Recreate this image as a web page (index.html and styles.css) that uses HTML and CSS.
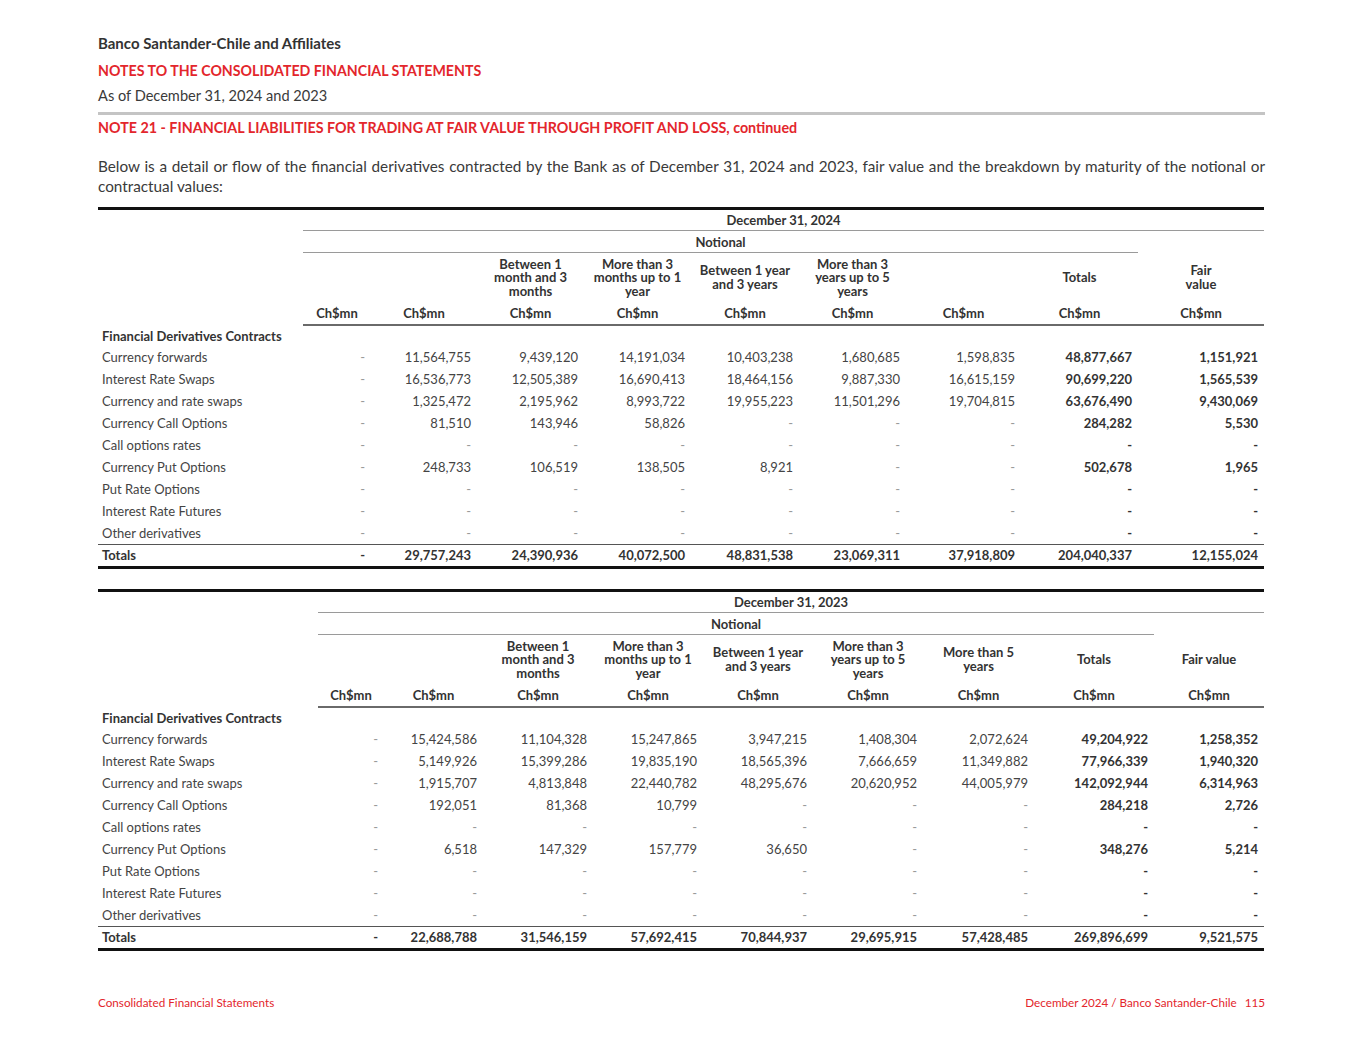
FILE: index.html
```html
<!DOCTYPE html>
<html lang="en">
<head>
<meta charset="utf-8">
<title>Banco Santander-Chile - Note 21</title>
<link rel="stylesheet" href="styles.css">
</head>
<body>
<div class="page">
  <header class="doc-head">
    <div class="company">Banco Santander-Chile and Affiliates</div>
    <div class="notes-title">NOTES TO THE CONSOLIDATED FINANCIAL STATEMENTS</div>
    <div class="as-of">As of December 31, 2024 and 2023</div>
    <div class="rule"></div>
    <div class="note-title">NOTE 21 - FINANCIAL LIABILITIES FOR TRADING AT FAIR VALUE THROUGH PROFIT AND LOSS, continued</div>
  </header>

  <p class="intro">Below is a detail or flow of the financial derivatives contracted by the Bank as of December 31, 2024 and 2023, fair value and the breakdown by maturity of the notional or contractual values:</p>

  <table class="fin t2024">
    <colgroup>
      <col class="c-label"><col class="c1"><col class="c2"><col class="c3"><col class="c4"><col class="c5"><col class="c6"><col class="c7"><col class="c8"><col class="c9">
    </colgroup>
    <thead>
      <tr class="h-date"><th class="blank" rowspan="4"></th><th colspan="9" class="span-line">December 31, 2024</th></tr>
      <tr class="h-notional"><th colspan="8" class="span-line">Notional</th><th></th></tr>
      <tr class="h-labels">
        <th></th><th></th>
        <th>Between 1<br>month and 3<br>months</th>
        <th>More than 3<br>months up to 1<br>year</th>
        <th>Between 1 year<br>and 3 years</th>
        <th>More than 3<br>years up to 5<br>years</th>
        <th></th>
        <th>Totals</th>
        <th>Fair<br>value</th>
      </tr>
      <tr class="h-units"><th>Ch$mn</th><th>Ch$mn</th><th>Ch$mn</th><th>Ch$mn</th><th>Ch$mn</th><th>Ch$mn</th><th>Ch$mn</th><th>Ch$mn</th><th>Ch$mn</th></tr>
    </thead>
    <tbody>
      <tr class="group"><td colspan="10">Financial Derivatives Contracts</td></tr>
      <tr><td>Currency forwards</td><td class="d">-</td><td>11,564,755</td><td>9,439,120</td><td>14,191,034</td><td>10,403,238</td><td>1,680,685</td><td>1,598,835</td><td class="b">48,877,667</td><td class="b">1,151,921</td></tr>
      <tr><td>Interest Rate Swaps</td><td class="d">-</td><td>16,536,773</td><td>12,505,389</td><td>16,690,413</td><td>18,464,156</td><td>9,887,330</td><td>16,615,159</td><td class="b">90,699,220</td><td class="b">1,565,539</td></tr>
      <tr><td>Currency and rate swaps</td><td class="d">-</td><td>1,325,472</td><td>2,195,962</td><td>8,993,722</td><td>19,955,223</td><td>11,501,296</td><td>19,704,815</td><td class="b">63,676,490</td><td class="b">9,430,069</td></tr>
      <tr><td>Currency Call Options</td><td class="d">-</td><td>81,510</td><td>143,946</td><td>58,826</td><td class="d">-</td><td class="d">-</td><td class="d">-</td><td class="b">284,282</td><td class="b">5,530</td></tr>
      <tr><td>Call options rates</td><td class="d">-</td><td class="d">-</td><td class="d">-</td><td class="d">-</td><td class="d">-</td><td class="d">-</td><td class="d">-</td><td class="b">-</td><td class="b">-</td></tr>
      <tr><td>Currency Put Options</td><td class="d">-</td><td>248,733</td><td>106,519</td><td>138,505</td><td>8,921</td><td class="d">-</td><td class="d">-</td><td class="b">502,678</td><td class="b">1,965</td></tr>
      <tr><td>Put Rate Options</td><td class="d">-</td><td class="d">-</td><td class="d">-</td><td class="d">-</td><td class="d">-</td><td class="d">-</td><td class="d">-</td><td class="b">-</td><td class="b">-</td></tr>
      <tr><td>Interest Rate Futures</td><td class="d">-</td><td class="d">-</td><td class="d">-</td><td class="d">-</td><td class="d">-</td><td class="d">-</td><td class="d">-</td><td class="b">-</td><td class="b">-</td></tr>
      <tr><td>Other derivatives</td><td class="d">-</td><td class="d">-</td><td class="d">-</td><td class="d">-</td><td class="d">-</td><td class="d">-</td><td class="d">-</td><td class="b">-</td><td class="b">-</td></tr>
      <tr class="totals"><td>Totals</td><td>-</td><td>29,757,243</td><td>24,390,936</td><td>40,072,500</td><td>48,831,538</td><td>23,069,311</td><td>37,918,809</td><td>204,040,337</td><td>12,155,024</td></tr>
    </tbody>
  </table>

  <table class="fin t2023">
    <colgroup>
      <col class="c-label"><col class="c1"><col class="c2"><col class="c3"><col class="c4"><col class="c5"><col class="c6"><col class="c7"><col class="c8"><col class="c9">
    </colgroup>
    <thead>
      <tr class="h-date"><th class="blank" rowspan="4"></th><th colspan="9" class="span-line">December 31, 2023</th></tr>
      <tr class="h-notional"><th colspan="8" class="span-line">Notional</th><th></th></tr>
      <tr class="h-labels">
        <th></th><th></th>
        <th>Between 1<br>month and 3<br>months</th>
        <th>More than 3<br>months up to 1<br>year</th>
        <th>Between 1 year<br>and 3 years</th>
        <th>More than 3<br>years up to 5<br>years</th>
        <th>More than 5<br>years</th>
        <th>Totals</th>
        <th>Fair value</th>
      </tr>
      <tr class="h-units"><th>Ch$mn</th><th>Ch$mn</th><th>Ch$mn</th><th>Ch$mn</th><th>Ch$mn</th><th>Ch$mn</th><th>Ch$mn</th><th>Ch$mn</th><th>Ch$mn</th></tr>
    </thead>
    <tbody>
      <tr class="group"><td colspan="10">Financial Derivatives Contracts</td></tr>
      <tr><td>Currency forwards</td><td class="d">-</td><td>15,424,586</td><td>11,104,328</td><td>15,247,865</td><td>3,947,215</td><td>1,408,304</td><td>2,072,624</td><td class="b">49,204,922</td><td class="b">1,258,352</td></tr>
      <tr><td>Interest Rate Swaps</td><td class="d">-</td><td>5,149,926</td><td>15,399,286</td><td>19,835,190</td><td>18,565,396</td><td>7,666,659</td><td>11,349,882</td><td class="b">77,966,339</td><td class="b">1,940,320</td></tr>
      <tr><td>Currency and rate swaps</td><td class="d">-</td><td>1,915,707</td><td>4,813,848</td><td>22,440,782</td><td>48,295,676</td><td>20,620,952</td><td>44,005,979</td><td class="b">142,092,944</td><td class="b">6,314,963</td></tr>
      <tr><td>Currency Call Options</td><td class="d">-</td><td>192,051</td><td>81,368</td><td>10,799</td><td class="d">-</td><td class="d">-</td><td class="d">-</td><td class="b">284,218</td><td class="b">2,726</td></tr>
      <tr><td>Call options rates</td><td class="d">-</td><td class="d">-</td><td class="d">-</td><td class="d">-</td><td class="d">-</td><td class="d">-</td><td class="d">-</td><td class="b">-</td><td class="b">-</td></tr>
      <tr><td>Currency Put Options</td><td class="d">-</td><td>6,518</td><td>147,329</td><td>157,779</td><td>36,650</td><td class="d">-</td><td class="d">-</td><td class="b">348,276</td><td class="b">5,214</td></tr>
      <tr><td>Put Rate Options</td><td class="d">-</td><td class="d">-</td><td class="d">-</td><td class="d">-</td><td class="d">-</td><td class="d">-</td><td class="d">-</td><td class="b">-</td><td class="b">-</td></tr>
      <tr><td>Interest Rate Futures</td><td class="d">-</td><td class="d">-</td><td class="d">-</td><td class="d">-</td><td class="d">-</td><td class="d">-</td><td class="d">-</td><td class="b">-</td><td class="b">-</td></tr>
      <tr><td>Other derivatives</td><td class="d">-</td><td class="d">-</td><td class="d">-</td><td class="d">-</td><td class="d">-</td><td class="d">-</td><td class="d">-</td><td class="b">-</td><td class="b">-</td></tr>
      <tr class="totals"><td>Totals</td><td>-</td><td>22,688,788</td><td>31,546,159</td><td>57,692,415</td><td>70,844,937</td><td>29,695,915</td><td>57,428,485</td><td>269,896,699</td><td>9,521,575</td></tr>
    </tbody>
  </table>

  <footer class="doc-foot">
    <span>Consolidated Financial Statements</span>
    <span>December 2024 / Banco Santander-Chile<span class="pg">115</span></span>
  </footer>
</div>
</body>
</html>
```

FILE: styles.css
```css
* { box-sizing: border-box; }
html, body { margin: 0; padding: 0; background: #fff; }
body {
  font-family: Lato, "Open Sans", "Liberation Sans", sans-serif;
  color: #3a3a3a;
}
.page {
  width: 1365px;
  height: 1055px;
  padding: 33px 100px 0 98px;
  display: flex;
  flex-direction: column;
}
.doc-head { display: flex; flex-direction: column; }
.company { font-size: 15px; font-weight: 700; line-height: 20px; color: #333; }
.notes-title { font-size: 14.2px; font-weight: 700; line-height: 20px; color: #e3262c; margin-top: 8px; }
.as-of { font-size: 14.6px; line-height: 20px; color: #3a3a3a; margin-top: 5px; }
.rule { height: 3px; background: #c4c4c4; margin-top: 6px; }
.note-title { font-size: 14.3px; font-weight: 700; line-height: 20px; color: #e3262c; margin-top: 3px; }
.intro {
  margin: 18px 0 0 0;
  font-size: 15.3px;
  line-height: 20px;
  text-align: justify;
  color: #3a3a3a;
}

table.fin {
  width: 1166px;
  border-collapse: collapse;
  table-layout: fixed;
  font-size: 13px;
  color: #444;
  border-top: 3px solid #111;
  border-bottom: 3px solid #111;
}
table.t2024 { margin-top: 11px; }
table.t2023 { margin-top: 20px; }

.t2024 .c-label { width: 205px; }
.t2024 .c1 { width: 68px; }
.t2024 .c2 { width: 106px; }
.t2024 .c3 { width: 107px; }
.t2024 .c4 { width: 107px; }
.t2024 .c5 { width: 108px; }
.t2024 .c6 { width: 107px; }
.t2024 .c7 { width: 115px; }
.t2024 .c8 { width: 117px; }
.t2024 .c9 { width: 126px; }

.t2023 .c-label { width: 220px; }
.t2023 .c1 { width: 66px; }
.t2023 .c2 { width: 99px; }
.t2023 .c3 { width: 110px; }
.t2023 .c4 { width: 110px; }
.t2023 .c5 { width: 110px; }
.t2023 .c6 { width: 110px; }
.t2023 .c7 { width: 111px; }
.t2023 .c8 { width: 120px; }
.t2023 .c9 { width: 110px; }

table.fin th {
  font-weight: 700;
  color: #333;
  text-align: center;
  padding: 0 4px;
  white-space: nowrap;
}
.h-date th, .h-notional th { height: 22px; line-height: 20px; padding: 0 4px 1px; }
.h-date th.span-line, .h-notional th.span-line { border-bottom: 1px solid #9a9a9a; }
.h-labels th { height: 50px; line-height: 13.5px; vertical-align: middle; padding-top: 2px; }
.h-units th { height: 22px; line-height: 20px; border-bottom: 2px solid #6a6a6a; }

table.fin td {
  height: 22px;
  line-height: 20px;
  padding: 0 6px 1px 4px;
  text-align: right;
  white-space: nowrap;
}
table.fin td:first-child { text-align: left; padding-left: 4px; }
.group td { font-weight: 700; color: #333; padding-left: 3px; }
td.d { color: #9a9a9a; }
td.b { font-weight: 700; color: #333; }
.totals td { font-weight: 700; color: #333; border-top: 1px solid #555; }

.doc-foot {
  margin-top: auto;
  margin-bottom: 46px;
  display: flex;
  justify-content: space-between;
  font-size: 11.7px;
  line-height: 14px;
  color: #e3262c;
}
.pg { margin-left: 8px; }
```
